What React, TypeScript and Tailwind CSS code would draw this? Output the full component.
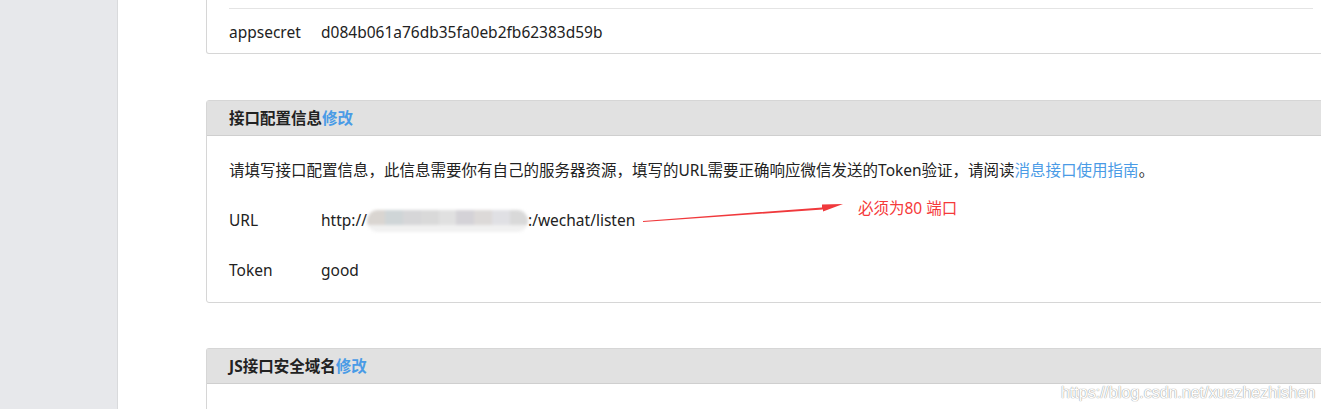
import React from "react";

const font = { fontFamily: '"Noto Sans", "Noto Sans CJK SC", sans-serif' };

function Blur() {
  const cols = ["#d9d5d1", "#cfd5d7", "#d6d6d8", "#d9d9d9", "#e0e0e0", "#d4d2d7", "#dcd9d8", "#e0e0e4", "#d9d9d9"];
  return (
    <span className="inline-flex h-[22px] w-[161px] overflow-hidden rounded-full align-middle blur-[1.5px]">
      {cols.map((c, i) => (
        <span key={i} className="flex h-full flex-1 flex-col">
          <span className="h-[15px]" style={{ background: c }} />
          <span className="flex-1 bg-[#f1f1f1]" />
        </span>
      ))}
    </span>
  );
}

export default function App() {
  return (
    <div className="relative flex h-[409px] w-[1321px] overflow-hidden bg-white text-[15.5px] text-[#222]" style={font}>
      <div className="w-[118px] shrink-0 border-r border-[#d9dadc] bg-[#e7e8eb]" />
      <div className="flex-1 pl-[88px]">
        {/* card 1 */}
        <div className="w-[1130px] rounded-b-[3px] border-x border-b border-[#d6d6d6] px-[22px]">
          <div className="h-[8px]" />
          <div className="flex h-[45px] items-center border-t border-[#e4e4e4] pt-[3px]">
            <span className="w-[92px]">appsecret</span>
            <span>d084b061a76db35fa0eb2fb62383d59b</span>
          </div>
        </div>

        {/* card 2 */}
        <div className="mt-[46px] w-[1130px] rounded-[3px] border border-[#d6d6d6]">
          <div className="flex h-[35px] items-center border-b border-[#cfcfcf] bg-[#e1e1e1] px-[22px] pt-[2px] font-bold">
            接口配置信息<span className="text-[#4a9be6]">修改</span>
          </div>
          <div className="px-[22px] pb-[6px] pt-[10px]">
            <div className="flex h-[50px] items-center">
              请填写接口配置信息，此信息需要你有自己的服务器资源，填写的URL需要正确响应微信发送的Token验证，请阅读
              <span className="text-[#4a9be6]">消息接口使用指南</span>。
            </div>
            <div className="relative flex h-[50px] items-center">
              <span className="w-[92px]">URL</span>
              <span className="flex items-center">
                http://
                <Blur />
                :/wechat/listen
              </span>
              <svg className="absolute left-[413px] top-[6px]" width="205" height="22" viewBox="0 0 205 22">
                <polygon points="1,19 180,5.5 180,2.5 201,2 181,9.5 181,7.5 1,20" fill="#f0393c" />
              </svg>
              <span className="absolute left-[629px] top-[1px] text-[15.5px] text-[#f53a3a]">必须为80 端口</span>
            </div>
            <div className="flex h-[50px] items-center">
              <span className="w-[92px]">Token</span>
              <span>good</span>
            </div>
          </div>
        </div>

        {/* card 3 */}
        <div className="mt-[45px] w-[1130px] rounded-t-[3px] border-x border-t border-[#d6d6d6]">
          <div className="flex h-[35px] items-center border-b border-[#cfcfcf] bg-[#e1e1e1] px-[22px] pt-[2px] font-bold">
            JS接口安全域名<span className="text-[#4a9be6]">修改</span>
          </div>
          <div className="h-[40px]" />
        </div>
      </div>
      <div
        className="absolute left-[1061px] top-[381px] text-[16px] text-white"
        style={{ fontFamily: '"Liberation Sans", Arial, sans-serif', textShadow: "0 0 1px #9a9a9a, 0 0 1px #9a9a9a" }}
      >
        https://blog.csdn.net/xuezhezhishen
      </div>
    </div>
  );
}
